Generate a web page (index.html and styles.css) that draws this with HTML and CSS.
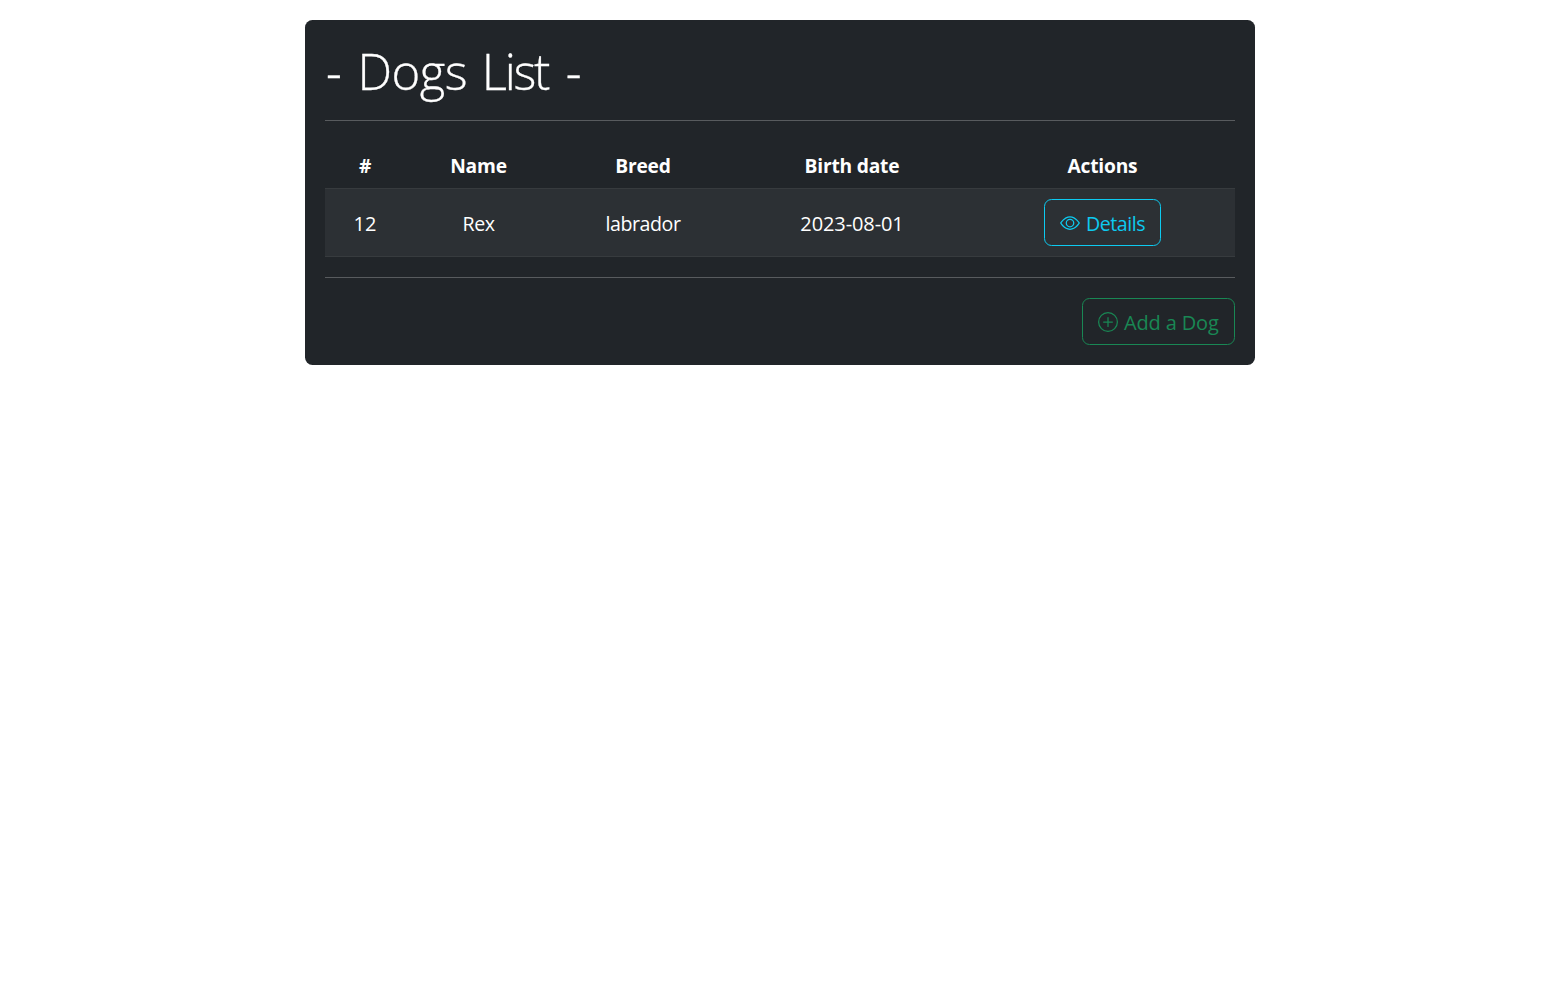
FILE: index.html
```html
<!DOCTYPE html>
<html lang="en">
<head>
<meta charset="utf-8">
<title>Dogs List</title>
<link rel="stylesheet" href="styles.css">
</head>
<body>
<main class="card">
  <h1 class="title">- <span class="t-dogs">Dogs</span> <span class="t-list">List</span> -</h1>
  <hr class="rule">
  <table class="table">
    <colgroup><col class="c-id"><col class="c-name"><col class="c-breed"><col class="c-birth"><col class="c-actions"></colgroup>
    <thead>
      <tr><th>#</th><th>Name</th><th>Breed</th><th>Birth date</th><th>Actions</th></tr>
    </thead>
    <tbody>
      <tr>
        <td>12</td><td class="word">Rex</td><td class="word">labrador</td><td class="date">2023-08-01</td>
        <td class="actions"><a class="btn btn-info"><svg class="icon" viewBox="0 0 16 16" fill="currentColor"><path d="M16 8s-3-5.5-8-5.5S0 8 0 8s3 5.5 8 5.5S16 8 16 8M1.173 8a13 13 0 0 1 1.66-2.043C4.12 4.668 5.88 3.5 8 3.5s3.879 1.168 5.168 2.457A13 13 0 0 1 14.828 8q-.086.13-.195.288c-.335.48-.83 1.12-1.465 1.755C11.879 11.332 10.119 12.5 8 12.5s-3.879-1.168-5.168-2.457A13 13 0 0 1 1.172 8z"/><path d="M8 5.5a2.5 2.5 0 1 0 0 5 2.5 2.5 0 0 0 0-5M4.5 8a3.5 3.5 0 1 1 7 0 3.5 3.5 0 0 1-7 0"/></svg><span class="label word">Details</span></a></td>
      </tr>
    </tbody>
  </table>
  <hr class="rule">
  <div class="footer">
    <a class="btn btn-success"><svg class="icon" viewBox="0 0 16 16" fill="currentColor"><path d="M8 15A7 7 0 1 1 8 1a7 7 0 0 1 0 14m0 1A8 8 0 1 0 8 0a8 8 0 0 0 0 16"/><path d="M8 4a.5.5 0 0 1 .5.5v3h3a.5.5 0 0 1 0 1h-3v3a.5.5 0 0 1-1 0v-3h-3a.5.5 0 0 1 0-1h3v-3A.5.5 0 0 1 8 4"/></svg><span class="label add">Add a Dog</span></a>
  </div>
</main>
</body>
</html>
```
FILE: styles.css
```css
* { box-sizing: border-box; }
body {
  margin: 0;
  background: #fff;
  color: #fff;
  font: 400 20px/30px "Segoe UI", "Open Sans", "Noto Sans", sans-serif;
}
.card {
  width: 950px;
  height: 345px;
  margin: 20px auto;
  padding: 20px;
  border-radius: 7.5px;
  background: #212529;
}
.title {
  height: 60px;
  margin: 0 0 20px;
  padding-left: 1px;
  font-size: 49px;
  font-weight: 300;
  line-height: 62px;
  white-space: nowrap;
  -webkit-text-stroke: .3px #fff;
}
.t-dogs { margin-left: 3px; letter-spacing: -.5px; }
.t-list { margin-left: 2px; margin-right: 5px; letter-spacing: -2.3px; }
.rule {
  margin: 0 0 20px;
  border: 0;
  border-top: 1px solid #fff;
  opacity: .25;
}
.table {
  width: 100%;
  margin-bottom: 20px;
  border-collapse: collapse;
  table-layout: fixed;
  text-align: center;
  white-space: nowrap;
}
.c-id { width: 80px; }
.c-name { width: 147px; }
.c-breed { width: 182px; }
.c-birth { width: 236px; }
.table th, .table td {
  padding: 12px 0 9px;
  border-bottom: 1px solid #373b3e;
  vertical-align: middle;
}
.table th {
  height: 47px;
  padding: 10px 0 7px;
  font-size: 19.2px;
  font-weight: 700;
  letter-spacing: -.2px;
}
.table td { height: 68px; background: #2c3034; }
.table .actions { padding: 10px 0; }
.word { font-size: 19.6px; letter-spacing: -.45px; }
.date { letter-spacing: -.1px; }
.btn {
  display: inline-flex;
  align-items: center;
  gap: 6px;
  height: 47px;
  padding: 1px 15px 0;
  border: 1px solid;
  border-radius: 7.5px;
  vertical-align: top;
}
.btn-info { width: 117px; color: #0dcaf0; }
.btn-success { width: 153px; color: #198754; }
.icon { flex: none; width: 20px; height: 20px; }
.label { padding-top: 2px; white-space: nowrap; }
.add { letter-spacing: -.15px; }
.footer { display: flex; justify-content: flex-end; }
```
